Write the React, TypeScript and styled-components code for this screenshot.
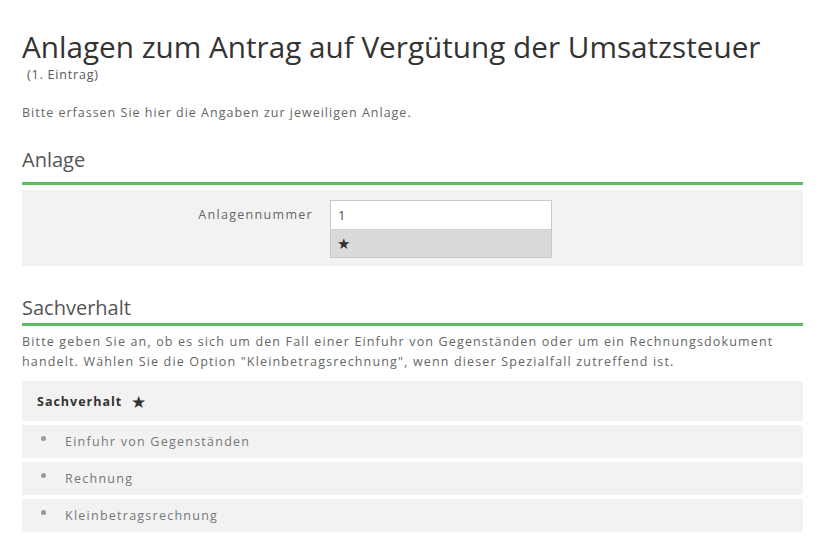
import * as React from 'react';
import styled, { createGlobalStyle } from 'styled-components';

const GlobalStyle = createGlobalStyle`
    body {
        margin: 0;
        background: #fff;
        font-family: "Open Sans", "Liberation Sans", sans-serif;
        color: #444;
    }
`;

const Page = styled.div`
    width: 781px;
    padding: 29px 0 0 22px;
`;
const Title = styled.h1`
    margin: 0;
    font-size: 29.7px;
    font-weight: 400;
    line-height: 36px;
    color: #333;
`;
const Entry = styled.div`
    margin-top: 2px;
    font-size: 12.5px;
    letter-spacing: 0.8px;
    color: #555;
    padding-left: 5px;
    line-height: 16px;
`;
const Intro = styled.p`
    margin: 21px 0 0;
    font-size: 12.5px;
    letter-spacing: 1px;
    line-height: 18px;
    color: #666;
`;
const SectionTitle = styled.h2<{ $top: number; $gap: number }>`
    margin: ${p => p.$top}px 0 0;
    font-size: 20px;
    font-weight: 400;
    line-height: 28px;
    color: #555;
    padding-bottom: ${p => p.$gap}px;
    border-bottom: 3px solid #5cbf5f;
`;
const FieldBox = styled.div`
    margin-top: 5px;
    background: #f2f2f2;
    padding: 10px 0 8px;
    display: grid;
    grid-template-columns: 291px 222px;
    column-gap: 17px;
    align-items: start;
`;
const FieldLabel = styled.label`
    text-align: right;
    font-size: 12.5px;
    letter-spacing: 1.3px;
    color: #666;
    padding-top: 6px;
`;
const InputWrap = styled.div`
    border: 1px solid #c9c9c9;
`;
const Input = styled.div`
    background: #fff;
    height: 28px;
    line-height: 28px;
    padding-left: 7px;
    font-size: 13px;
    color: #4a4a6a;
    border-bottom: 1px solid #d0d0d0;
`;
const Required = styled.div`
    background: #dadada;
    height: 27px;
    line-height: 27px;
    padding-left: 6px;
    font-size: 15px;
    color: #333;
`;
const Hint = styled.p`
    margin: 6px 0 0;
    font-size: 12.5px;
    letter-spacing: 1.15px;
    line-height: 20px;
    color: #666;
`;
const OptionList = styled.div`
    margin-top: 9px;
    display: flex;
    flex-direction: column;
    gap: 4px;
`;
const OptionHead = styled.div`
    background: #f2f2f2;
    height: 40px;
    display: flex;
    align-items: center;
    padding-left: 15px;
    font-size: 12.5px;
    letter-spacing: 1px;
    font-weight: 700;
    color: #333;
    gap: 9px;
`;
const Star = styled.span`
    font-size: 17px;
    font-weight: 400;
`;
const Option = styled.div`
    background: #f2f2f2;
    height: 33px;
    display: flex;
    align-items: center;
    padding-left: 19px;
    font-size: 12.5px;
    letter-spacing: 1.25px;
    color: #777;
`;
const Bullet = styled.span`
    width: 5px;
    height: 5px;
    border-radius: 50%;
    background: #999;
    margin-right: 19px;
    margin-top: -7px;
`;

const options = ['Einfuhr von Gegenständen', 'Rechnung', 'Kleinbetragsrechnung'];

const App: React.FunctionComponent = () => (
    <Page>
        <GlobalStyle />
        <Title>Anlagen zum Antrag auf Vergütung der Umsatzsteuer</Title>
        <Entry>(1. Eintrag)</Entry>
        <Intro>Bitte erfassen Sie hier die Angaben zur jeweiligen Anlage.</Intro>

        <SectionTitle $top={24} $gap={8}>Anlage</SectionTitle>
        <FieldBox>
            <FieldLabel>Anlagennummer</FieldLabel>
            <InputWrap>
                <Input>1</Input>
                <Required>★</Required>
            </InputWrap>
        </FieldBox>

        <SectionTitle $top={28} $gap={1}>Sachverhalt</SectionTitle>
        <Hint>
            Bitte geben Sie an, ob es sich um den Fall einer Einfuhr von Gegenständen oder um ein
            Rechnungsdokument handelt. Wählen Sie die Option "Kleinbetragsrechnung", wenn dieser
            Spezialfall zutreffend ist.
        </Hint>
        <OptionList>
            <OptionHead>
                Sachverhalt <Star>★</Star>
            </OptionHead>
            {options.map(item => (
                <Option key={item}>
                    <Bullet />
                    {item}
                </Option>
            ))}
        </OptionList>
    </Page>
);

export default App;
